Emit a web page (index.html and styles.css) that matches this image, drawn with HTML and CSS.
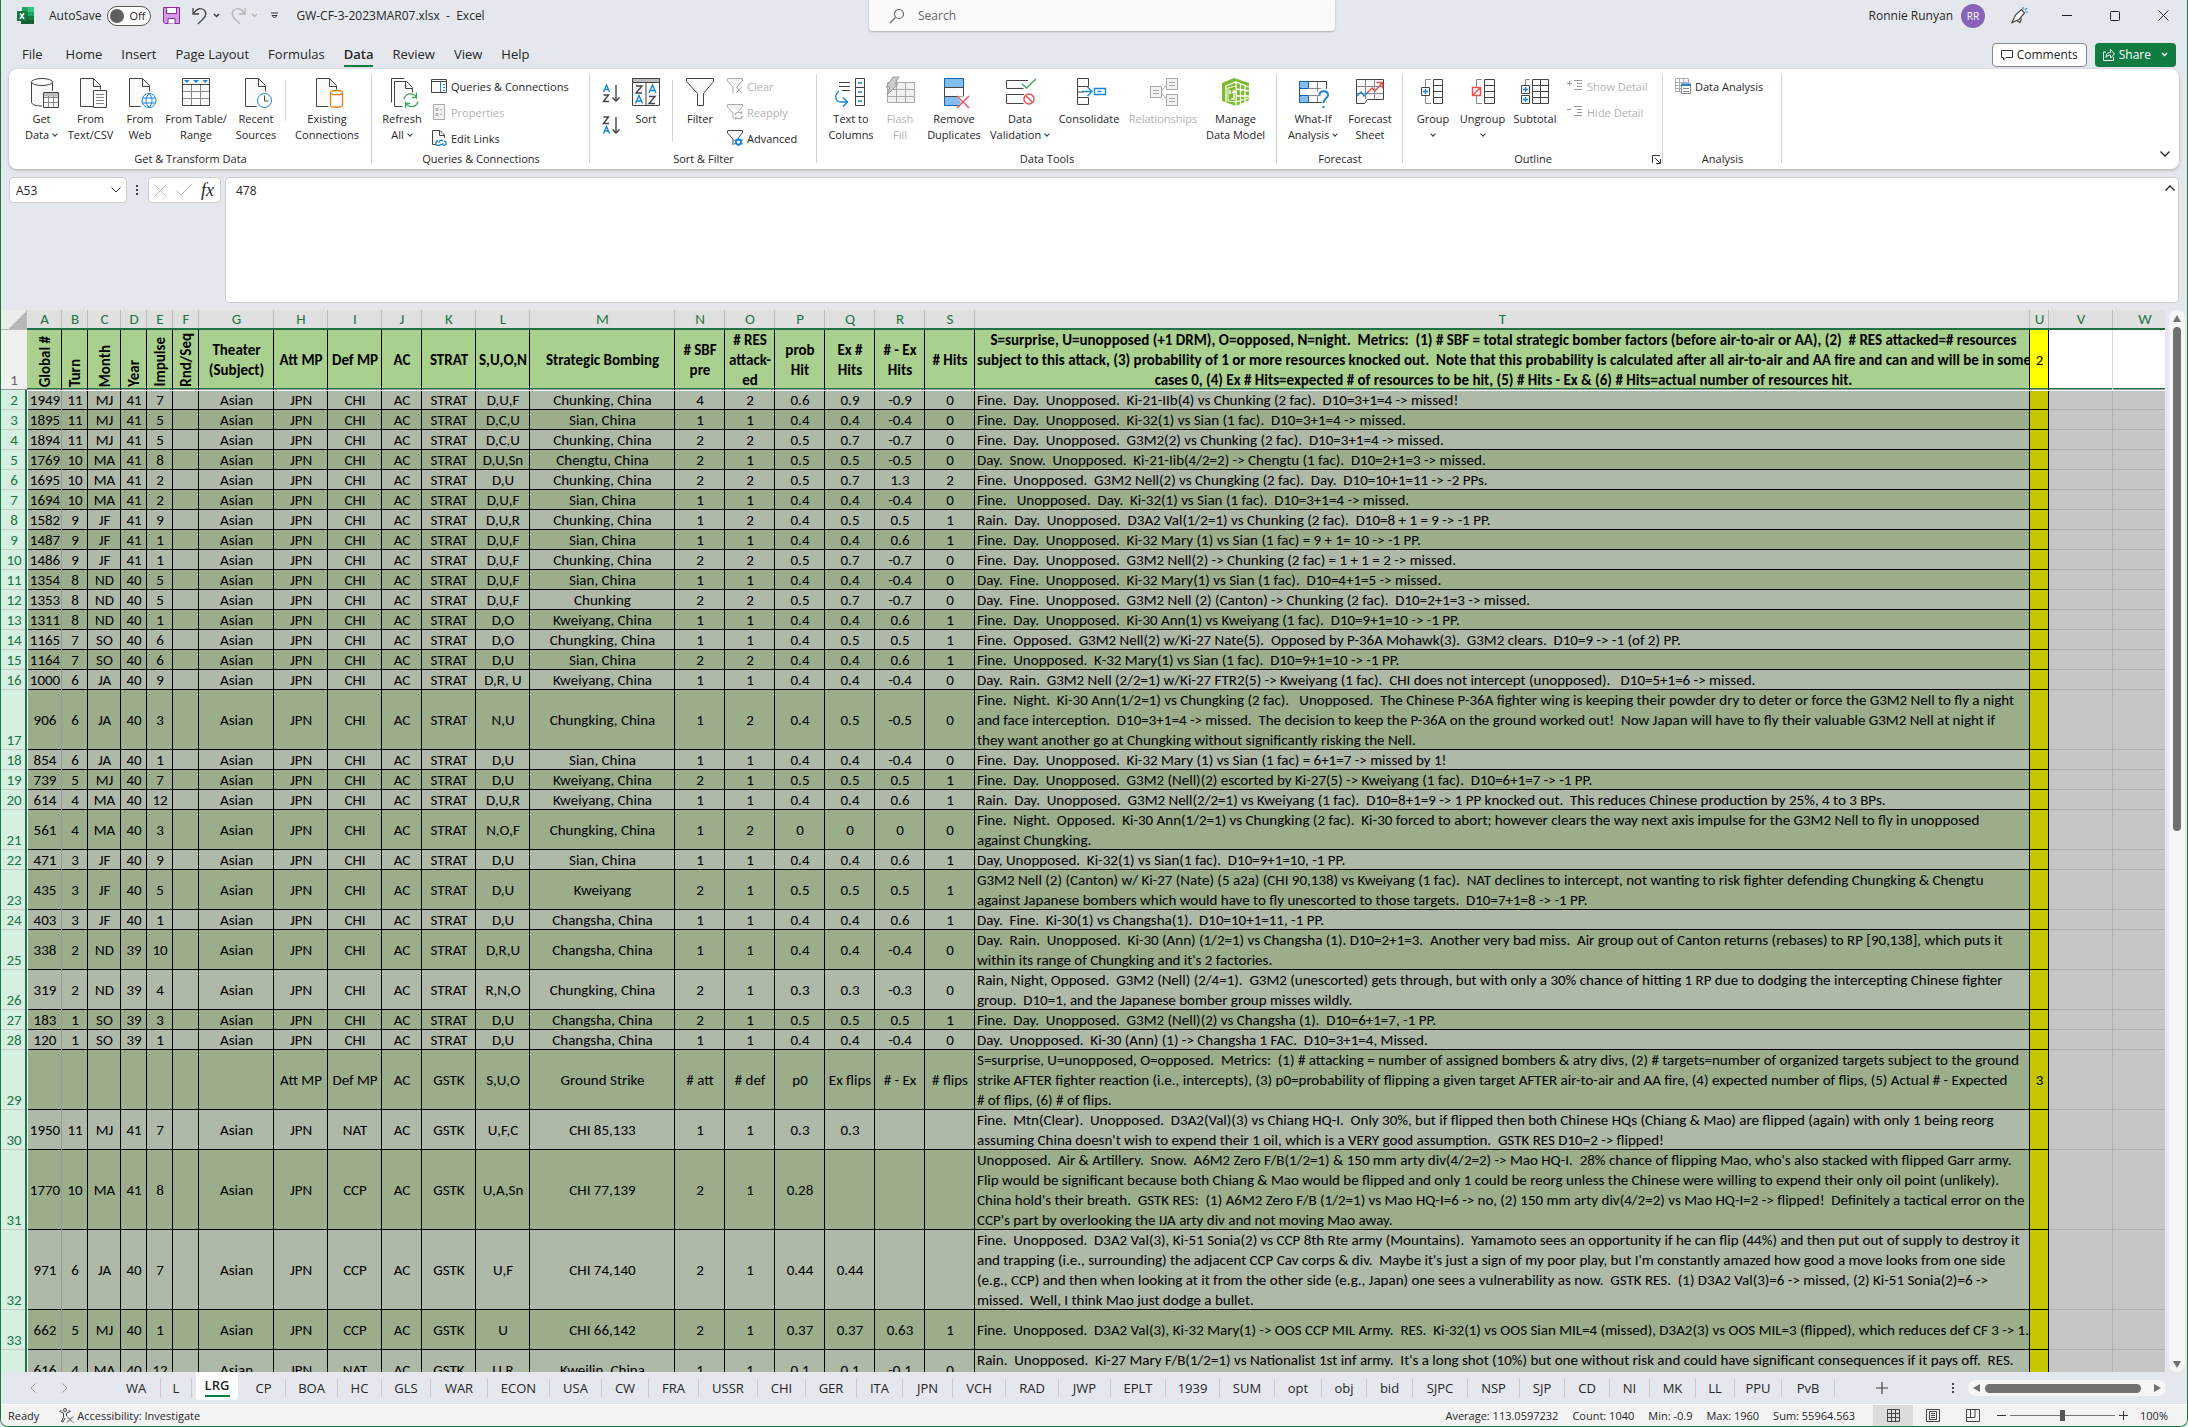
FILE: index.html
```html
<!DOCTYPE html>
<html lang="en">
<head>
  <meta charset="UTF-8" />
  <meta name="viewport" content="width=device-width, initial-scale=1" />
  <title>GW-CF-3-2023MAR07.xlsx - Excel</title>
  <link rel="stylesheet" href="styles.css">
</head>
<body>

  <header class="titlebar">
    <div class="quick">
      <svg class="logo" width="17" height="17" viewBox="0 0 17 17"><path fill="#21a366" d="M5 0h11v5H5z"/><path fill="#33c481" d="M11 0h6v5h-6z"/><path fill="#107c41" d="M5 5h6v4H5z"/><path fill="#21a366" d="M11 5h6v4h-6z"/><path fill="#185c37" d="M5 9h6v8H4V9z"/><path fill="#107c41" d="M11 9h6v4h-6z"/><path fill="#185c37" d="M11 13h6v4h-6z"/><path fill="#107c41" d="M0 4h10v10H0z"/><path stroke="#fff" stroke-width="1.500" d="M3 6.200l4 5.600M7 6.200l-4 5.600"/></svg>
      <label for="autosave">AutoSave</label>
      <span class="toggle"><input type="checkbox" id="autosave"><span class="toggle-text">Off</span></span>
      <button class="plain save" aria-label="Save"><svg width="17" height="17" viewBox="0 0 17 17"><path fill="#d59be0" stroke="#892c9c" d="M.5.5h16v16H2l-1.500-1.500z"/><path fill="#fff" stroke="#892c9c" d="M3.500.5h10v6h-10zM5 16.500v-5h7v5"/></svg></button>
      <button class="plain undo" aria-label="Undo"><svg width="16" height="18" viewBox="0 0 16 18"><path d="M1 1v6h6M1.500 6.500C5 1 9 .5 12 3c3 3 2 6-1 9l-5 5" fill="none" stroke="#444" stroke-width="1.300"/></svg><svg width="7" height="5" viewBox="0 0 7 5"><path d="M1 1l2.500 2.500L6 1" fill="none" stroke="#333" stroke-width="1.300"/></svg></button>
      <button class="plain redo" aria-label="Redo"><svg width="16" height="18" viewBox="0 0 16 18"><path d="M15 1v6H9M14.500 6.500C11 1 7 .5 4 3c-3 3-2 6 1 9l5 5" fill="none" stroke="#b4b4b4" stroke-width="1.300"/></svg><svg width="7" height="5" viewBox="0 0 7 5"><path d="M1 1l2.500 2.500L6 1" fill="none" stroke="#b4b4b4" stroke-width="1.300"/></svg></button>
      <button class="plain more" aria-label="Customize"><svg width="9" height="8" viewBox="0 0 9 8"><path d="M1 1h7M2 3.500L4.500 6 7 3.500z" fill="none" stroke="#333"/></svg></button>
      <span class="filename">GW-CF-3-2023MAR07.xlsx&nbsp; -&nbsp; Excel</span>
    </div>
    <div class="search">
      <svg width="16" height="16" viewBox="0 0 16 16"><circle cx="10" cy="6" r="4.500" fill="none" stroke="#666" stroke-width="1.200"/><path d="M6.500 9.500L1 15" stroke="#666" stroke-width="1.200"/></svg>
      <input type="text" placeholder="Search" aria-label="Search">
    </div>
    <div class="account">
      <span>Ronnie Runyan</span>
      <span class="avatar">RR</span>
      <button class="plain win" aria-label="Whats new"><svg width="18" height="18" viewBox="0 0 18 18"><path d="M2 15.500L5.500 8l6-5.500 3 3.500L9 12.500zM7 13.500l3 2 1.500-4" fill="#fff" stroke="#444" stroke-width="1.200"/><path d="M13 2.500V0M15 3l2-2M15.500 5H18" stroke="#2a8dd4" stroke-width="1.200"/></svg></button>
      <button class="plain win" aria-label="Minimize"><svg width="10" height="10" viewBox="0 0 10 10"><path d="M0 4.500h10" stroke="#222"/></svg></button>
      <button class="plain win" aria-label="Maximize"><svg width="10" height="10" viewBox="0 0 10 10"><rect x=".5" y=".5" width="9" height="9" rx="1" fill="none" stroke="#222"/></svg></button>
      <button class="plain win" aria-label="Close"><svg width="11" height="11" viewBox="0 0 11 11"><path d="M.5.5l10 10M10.500.5l-10 10" stroke="#222"/></svg></button>
    </div>
  </header>

  <nav class="menu">
    <a href="#">File</a>
    <a href="#">Home</a>
    <a href="#">Insert</a>
    <a href="#">Page Layout</a>
    <a href="#">Formulas</a>
    <a href="#" class="active">Data</a>
    <a href="#">Review</a>
    <a href="#">View</a>
    <a href="#">Help</a>
    <button class="comments"><svg width="12" height="12" viewBox="0 0 12 12"><path d="M.5 1.500h11v7H5l-2.500 2.500V8.500h-2z" fill="none" stroke="#333"/></svg>Comments</button>
    <button class="share"><svg width="12" height="13" viewBox="0 0 12 13"><path d="M3 4H.500v8.500h10V9" fill="none" stroke="#fff"/><path d="M3 9.500c0-4 2-5 4.500-5V1.500L11.500 6l-4 4V7C5.500 7 4 8 3 9.500z" fill="none" stroke="#fff"/></svg>Share<svg class="drop" width="7" height="5" viewBox="0 0 7 5"><path d="M1 1l2.500 2.500L6 1" fill="none" stroke="#fff" stroke-width="1.300"/></svg></button>
  </nav>

  <section class="ribbon">
    <div class="group g-get">
      <div class="tools">
        <button class="big w49"><svg viewBox="0 0 32 32"><path d="M5.500 5v20c0 2.500 4 4 10.500 4l1-14 9.500-1V5z" fill="#fafafa"/><path d="M5.500 5v20c0 2.500 4 4 10.500 4M26.500 14V5" class="k"/><ellipse cx="16" cy="5" rx="10.500" ry="3.500" class="kf"/><path class="kf" d="M17.500 15.500h15v15h-15z"/><path fill="#bbb" d="M18 16h14v3.500H18z"/><path class="g" d="M18 20.500h14M18 25.500h14M22.500 19v11M27.500 19v11"/></svg>Get<br>Data <i class="chev"></i></button>
        <button class="big w49"><svg viewBox="0 0 32 32"><path class="kf" d="M19.500 29.500h-14v-28h13l7 7v4"/><path class="k" d="M18.500 1.500v8h7"/><path class="kf" d="M18.500 13.500h13v17h-13z"/><path class="g" d="M21 17.500h8M21 20.500h8M21 23.500h8M21 26.500h8"/></svg>From<br>Text/CSV</button>
        <button class="big w50"><svg viewBox="0 0 32 32"><path class="kf" d="M16.500 29.500h-11v-28h13l7 7v6"/><path class="k" d="M18.500 1.500v8h7"/><circle cx="25" cy="23.500" r="7" class="bf"/><path class="b" d="M19 21h12M19 26h12M25 16.500c-4 4-4 10 0 14c4-4 4-10 0-14"/></svg>From<br>Web</button>
        <button class="big w62"><svg viewBox="0 0 32 32"><path class="kf" d="M2.500 1.500h27v27h-27z"/><path class="g" d="M3 14.500h26M3 21.500h26M11.500 8v20M20.500 8v20"/><path class="k" d="M2.500 7.500h27"/><path fill="#1a84d6" d="M4 3h5.500L6.800 6zM13 3h6l-3 3zM22.500 3H28l-2.700 3z"/></svg>From Table/<br>Range</button>
        <button class="big w58"><svg viewBox="0 0 32 32"><path class="kf" d="M16.500 29.500h-11v-28h13l7 7v6"/><path class="k" d="M18.500 1.500v8h7"/><circle cx="24.500" cy="23.500" r="7" class="bf"/><path class="k" d="M24.500 18.500v5.500h4"/></svg>Recent<br>Sources</button>
        <span class="split"></span>
        <button class="big w82"><svg viewBox="0 0 32 32"><path class="kf" d="M17.500 29.500h-12v-28h13l7 7v4"/><path class="k" d="M18.500 1.500v8h7"/><path fill="#fff" stroke="#e07b1a" stroke-width="1.300" d="M19.500 15.500v12.500c0 3 12 3 12 0v-12.500"/><ellipse cx="25.500" cy="15.500" rx="6" ry="2.200" fill="#fff" stroke="#e07b1a" stroke-width="1.300"/></svg>Existing<br>Connections</button>
      </div>
      <div class="caption">Get &amp; Transform Data</div>
    </div>
    <div class="group g-queries">
      <div class="tools">
        <button class="big w48"><svg viewBox="0 0 32 32"><path class="k" d="M5.500 25.500v-24h13"/><path class="kf" d="M16.500 29.500h-8v-25h12l6 6v5"/><path class="k" d="M19.500 4.500v7h7"/><path fill="none" stroke="#3fa35c" stroke-width="1.300" d="M18 22c2-7 10-6 12.500-1.500v-5M31 20.500h-5M32 24.500c-2 7-10 6-12.500 1.500v5M19 26.500h5"/></svg>Refresh<br>All <i class="chev"></i></button>
        <div class="stack s5">
          <button class="small"><svg viewBox="0 0 16 16"><path class="kf" d="M.5 1.500h15v13H.5z"/><path class="k" d="M.5 3.500h15"/><path class="b" d="M9.500 4v10M12 6.500h2M12 9.500h2M12 12.500h2"/></svg>Queries &amp; Connections</button>
          <button class="small" disabled><svg viewBox="0 0 16 16"><path fill="#f3f3f3" stroke="#aaa" d="M2.500.500h11v15h-11zM5 4.500h2v2H5zM5 9.500h2v2H5zM9 5.500h2M9 10.500h2"/></svg>Properties</button>
          <button class="small"><svg viewBox="0 0 16 16"><path class="kf" d="M5.500 14.500h-4V.5H9l4.500 4.500v3"/><path class="k" d="M8.500.5v5h5"/><path class="b" d="M7 11c-3 0-3 4.500 0 4.500h2M8 13c0-3 2-3.500 4-2M12 15.500c4 0 4-4.500 1-4.500M12 13c0 2-2 2-3 1" stroke-width="1.300"/></svg>Edit Links</button>
        </div>
      </div>
      <div class="caption">Queries &amp; Connections</div>
    </div>
    <div class="group g-sort">
      <div class="tools">
        <div class="stack az">
          <button class="plain" aria-label="Sort A to Z"><svg width="18" height="20" viewBox="0 0 18 20"><path class="b w" d="M1.500 8L4.500 1l3 7M2.500 5.500h4"/><path class="k w" d="M1.500 11h5l-5 6.500h5.500M14 1v16M10.500 13.500L14 17l3.500-3.500"/></svg></button>
          <button class="plain" aria-label="Sort Z to A"><svg width="18" height="20" viewBox="0 0 18 20"><path class="b w" d="M1.500 17.500l3-7 3 7M2.500 15h4"/><path class="k w" d="M1.500 1h5l-5 6.500h5.500M14 1v16M10.500 13.500L14 17l3.500-3.500"/></svg></button>
        </div>
        <button class="big w52"><svg viewBox="0 0 32 32"><path class="kf" d="M2.500 1.500h27v27h-27z"/><path fill="#bbb" stroke="#444" d="M2.500 1.500h27v4h-27z"/><path class="k" d="M16 5v24"/><path class="k w" d="M6 9h6l-6 7h6M19 19.500h6l-6 7h6"/><path class="b w" d="M5.500 26.500l3.500-8 3.500 8M7 24h4M19 16l3.500-8 3.500 8M20.500 13.500h4"/></svg>Sort</button>
        <span class="split tall"></span>
        <button class="big w54"><svg viewBox="0 0 32 32"><path class="kf" d="M2.500 1.500h27v3L19.500 16.500v12h-6v-12L2.500 4.500z"/></svg>Filter</button>
        <div class="stack">
          <button class="small" disabled><svg viewBox="0 0 16 16"><path fill="#f3f3f3" stroke="#aaa" d="M.5.500h15v2l-5 6v1M.5 1v2l5.500 6v6"/><path stroke="#aaa" d="M9 9l6 6M15 9l-6 6"/></svg>Clear</button>
          <button class="small" disabled><svg viewBox="0 0 16 16"><path fill="#f3f3f3" stroke="#aaa" d="M.5.500h15v2l-4 5M.5 1v2l5.500 6v6"/><path fill="none" stroke="#aaa" stroke-width="1.200" d="M8 11c1-4 6-3 6.500-1V7.500M15.500 12c-1 4-6 3-7 1v2.500"/></svg>Reapply</button>
          <button class="small"><svg viewBox="0 0 16 16"><path class="kf" d="M.5.500h15v2l-4 5M.5 1v2l5.500 6v6"/><circle cx="11.500" cy="12" r="2.500" fill="none" stroke="#1a84d6" stroke-width="1.800"/><path class="b" d="M11.500 7.500v2M11.500 14v2M7.500 10l2 1M13.500 13l2 1M7.500 14l2-1M13.500 11l2-1" stroke-width="1.600"/></svg>Advanced</button>
        </div>
      </div>
      <div class="caption">Sort &amp; Filter</div>
    </div>
    <div class="group g-tools">
      <div class="tools">
        <button class="big w56"><svg viewBox="0 0 32 32"><path class="k" d="M4 5.500h11M4 9.500h11M7 13.500h8"/><path class="kf" d="M20.500 1.500h9v27h-9zM20.500 10.500h9M20.500 19.500h9"/><path class="b w" d="M23 6h4M23 15h4M23 24h4M4 14c-5 4-4 11 2 11h6M8 20.500l4.500 4.500-4.500 4.500"/></svg>Text to<br>Columns</button>
        <button class="big w42" disabled><svg viewBox="0 0 32 32"><path fill="#f1f1f1" stroke="#aaa" d="M3.500 5.500h27v20h-27zM3.500 12.500h27M3.500 19.500h27M12.500 6v20M21.500 6v20"/><path fill="#ccc" stroke="#999" d="M9 0h6l-4 7h3L3 18l3-8H2z"/></svg>Flash<br>Fill</button>
        <button class="big w66"><svg viewBox="0 0 32 32"><path fill="#83beec" stroke="#0f64ad" d="M6.500 1.500h19v9h-19zM6.500 19.500h19v9h-19z"/><path class="kf" d="M6.500 10.500h19v9h-19z"/><path fill="#fff" d="M19 19.500h8v11h-8l4-5z"/><path stroke="#ee4b4b" stroke-width="1.400" d="M19 19l12 12M31 19L19 31"/></svg>Remove<br>Duplicates</button>
        <button class="big w66"><svg viewBox="0 0 32 32"><path class="kf" d="M24 3.500H2.500v8h17M20 17.500H2.500v9h17"/><path fill="none" stroke="#3fa35c" stroke-width="1.400" d="M18 7l4.500 4L32 2"/><circle cx="25" cy="22" r="5" fill="#fff" stroke="#ee4b4b" stroke-width="1.400"/><path stroke="#ee4b4b" stroke-width="1.400" d="M21.500 18.500l7 7"/></svg>Data<br>Validation <i class="chev"></i></button>
        <button class="big w72"><svg viewBox="0 0 32 32"><path class="kf" d="M4.500 1.500h11v8h-11zM4.500 20.500h11v7h-11z"/><path class="k" d="M4.500 9.500v11M4.500 15h6"/><path class="b w" d="M9 14.500h9M14.500 10l4.500 4.500-4.500 4.500M21.500 11.500h11v6h-11zM24.500 14.500h4"/></svg>Consolidate</button>
        <button class="big w76" disabled><svg viewBox="0 0 32 32"><path fill="#f1f1f1" stroke="#aaa" d="M3.500 9.500h11v11h-11zM19.500 1.500h11v11h-11zM19.500 17.500h11v11h-11zM14.500 14l5-6M14.500 16l5 6M6 13.500h6M6 16.500h6M22 5.500h6M22 8.500h6M22 21.500h6M22 24.500h6"/></svg>Relationships</button>
        <button class="big w69"><svg viewBox="0 0 32 32"><path fill="#7dbb2c" d="M2 6l12-5 15 5v17l-13 6-14-5z"/><path fill="none" stroke="#fff" stroke-width="1.300" d="M6 25V9l10-4 13 5M16 5v24M20.500 7v20M25 8.500v17M16 12l13 2M16 19l13 0M16 25l13-4"/><path fill="#7dbb2c" stroke="#fff" d="M8 11l8-2v16l-8-1z"/><path fill="none" stroke="#fff" stroke-width="1.400" d="M11 22h3v-8M12 16l2-2.500 2 2.500M10 13v4"/></svg>Manage<br>Data Model</button>
      </div>
      <div class="caption">Data Tools</div>
    </div>
    <div class="group g-forecast">
      <div class="tools">
        <button class="big w60"><svg viewBox="0 0 32 32"><path class="kf" d="M2.500 4.500h27v21h-27z"/><path class="g" d="M11.500 11.500h18M11.500 18.500h12M20.500 5v20"/><path fill="#83beec" stroke="#0f64ad" d="M2.500 4.500h9v7h-9zM2.500 18.500h9v7h-9z"/><path fill="none" stroke="#fff" stroke-width="5" d="M22 18c0-6 9-6 9 0 0 4-4 3-4 8v5"/><path class="b" stroke-width="2" d="M22.500 18c0-5 8.500-5 8.500 0 0 4-4.500 3-4.500 8M26.500 29v2"/></svg>What-If<br>Analysis <i class="chev"></i></button>
        <button class="big w54"><svg viewBox="0 0 32 32"><path class="kf" d="M2.500 2.500h27v20h-16l-3 4h-8z"/><path class="g" d="M3 9.500h26M3 16.500h26M11.500 3v19M20.500 3v19"/><path class="b w" d="M3 19l4-4 3 4 4-4"/><path fill="none" stroke="#ee4b4b" stroke-width="1.400" d="M14 15l4-4 3 3 7-8M22.500 5.500h6v6"/></svg>Forecast<br>Sheet</button>
      </div>
      <div class="caption">Forecast</div>
    </div>
    <div class="group g-outline">
      <div class="tools">
        <button class="big w48"><svg viewBox="0 0 32 32"><path class="kf" d="M16.500 2.500h9v24h-9zM16.500 8.500h9M16.500 14.500h9M16.500 20.500h9"/><path class="g" d="M14 2.500H8.500v8M8.500 19v7.500H14"/><path class="kf" d="M4.500 10.500h8v8h-8z"/><path class="b w" d="M6 14.500h5M8.500 12v5"/></svg>Group<br><i class="chev"></i></button>
        <button class="big w51"><svg viewBox="0 0 32 32"><path class="kf" d="M17.500 2.500h10v24h-10zM17.500 8.500h10M17.500 14.500h10M17.500 20.500h10"/><path class="g" d="M15 2.500H9.500v8M9.500 19v7.500H15"/><path fill="#fff" stroke="#ee4b4b" stroke-width="1.400" d="M5.500 10.500h8v8h-8zM5.500 18.500l8-8"/></svg>Ungroup<br><i class="chev"></i></button>
        <button class="big w54"><svg viewBox="0 0 32 32"><path class="kf" d="M13.500 2.500h16v24h-16zM13.500 8.500h16M13.500 14.500h16M13.500 20.500h16M21.500 2.500v24"/><path class="g" d="M11 2.500H6.500v6"/><path class="kf" d="M2.500 8.500h8v8h-8zM2.500 18.500h8v8h-8z"/><path class="b w" d="M4 12.500h5M6.500 10v5M4 22.500h5M6.500 20v5"/></svg>Subtotal</button>
        <div class="stack s5">
          <button class="small" disabled><svg viewBox="0 0 16 16"><path fill="none" stroke="#999" d="M0 5.500h5M2.500 3v5M7 2.500h8M10 5.500h5M10 8.500h5M7 11.500h8"/></svg>Show Detail</button>
          <button class="small" disabled><svg viewBox="0 0 16 16"><path fill="none" stroke="#999" d="M0 5.500h4M7 2.500h8M10 5.500h5M10 8.500h5M7 11.500h8"/></svg>Hide Detail</button>
        </div>
      </div>
      <div class="caption">Outline<button class="plain launcher" aria-label="Outline settings"><svg width="9" height="9" viewBox="0 0 9 9"><path d="M.5 8V.5H8M3 3l5 5M8.500 4v4.500H4" fill="none" stroke="#333"/></svg></button></div>
    </div>
    <div class="group g-analysis">
      <div class="tools">
        <div class="stack">
          <button class="small"><svg viewBox="0 0 16 16"><path fill="#fff" stroke="#aaa" d="M.5.500h13v13H.500zM.5 4.500h13M.5 7.500h13M.5 10.500h13M4.500.5v13M8.500.5v13"/><path fill="#fff" stroke="#888" d="M6.500 6.500h9v9h-9zM8 10.500h6M8 13.500h6"/><path fill="#2f7fc9" d="M6 5.500h10v2.500H6z"/></svg>Data Analysis</button>
        </div>
      </div>
      <div class="caption">Analysis</div>
    </div>
    <button class="plain collapse" aria-label="Collapse ribbon"><svg width="10" height="6" viewBox="0 0 10 6"><path d="M.5.5L5 5 9.500.5" fill="none" stroke="#222" stroke-width="1.300"/></svg></button>
  </section>

  <section class="formula-row">
    <div class="namebox">
      <input type="text" value="A53" aria-label="Name box">
      <svg width="10" height="6" viewBox="0 0 10 6"><path d="M.5.5L5 5 9.500.5" fill="none" stroke="#333"/></svg>
    </div>
    <span class="grip"></span>
    <div class="fx">
      <button class="plain" aria-label="Cancel"><svg width="13" height="13" viewBox="0 0 13 13"><path d="M.5.5l12 12M12.500.5l-12 12" stroke="#b8b8b8"/></svg></button>
      <button class="plain" aria-label="Enter"><svg width="16" height="12" viewBox="0 0 16 12"><path d="M.5 6.500l4.500 4.500L15.500.5" fill="none" stroke="#b8b8b8"/></svg></button>
      <button class="plain fx-label">fx</button>
    </div>
    <div class="formula">
      <textarea aria-label="Formula">478</textarea>
      <svg width="10" height="6" viewBox="0 0 10 6"><path d="M.5 5.500L5 1l4.500 4.500" fill="none" stroke="#222" stroke-width="1.300"/></svg>
    </div>
  </section>

  <main class="sheet">
    <div class="grid-wrap">
      <table class="grid">
        <colgroup id="cols"></colgroup>
        <thead id="head"></thead>
        <tbody id="rows"></tbody>
      </table>
    </div>
    <div class="vscroll"><i class="up"></i><div class="vthumb"></div><i class="down"></i></div>
  </main>

  <nav class="tabs">
    <button class="plain arrow" aria-label="Previous sheet"><svg width="6" height="10" viewBox="0 0 6 10"><path d="M5.500.5L1 5l4.500 4.500" fill="none" stroke="#999"/></svg></button>
    <button class="plain arrow" aria-label="Next sheet"><svg width="6" height="10" viewBox="0 0 6 10"><path d="M.5.5L5 5 .5 9.500" fill="none" stroke="#999"/></svg></button>
    <div class="tab-list" id="tabs"></div>
    <button class="plain add" aria-label="New sheet"><svg width="12" height="12" viewBox="0 0 12 12"><path d="M6 0v12M0 6h12" stroke="#444" stroke-width="1.200"/></svg></button>
    <span class="grip"></span>
    <div class="hscroll"><i class="left"></i><div class="hthumb"></div><i class="right"></i></div>
  </nav>

  <footer class="status">
    <span>Ready</span>
    <button class="plain access"><svg width="15" height="15" viewBox="0 0 15 15"><circle cx="6" cy="2" r="1.500" class="k"/><path class="k" d="M1 3.500l3.500 1.500v4L2.500 13.500l1.500.500 2-4M11 3.500L7.500 5v3M.5 3.500c.5-1 1-1 2-.5M11.500 3.500c-.5-1-1-1-2-.5M8 8.500l6 6M14 8.500l-6 6"/></svg>Accessibility: Investigate</button>
    <div class="stats">
      <span>Average: 113.0597232</span>
      <span>Count: 1040</span>
      <span>Min: -0.9</span>
      <span>Max: 1960</span>
      <span>Sum: 55964.563</span>
    </div>
    <button class="plain view on" aria-label="Normal view"><svg width="13" height="13" viewBox="0 0 13 13"><path class="k" d="M.5.500h12v12H.500zM.5 4.500h12M.5 8.500h12M4.500.5v12M8.500.5v12"/></svg></button>
    <button class="plain view" aria-label="Page layout view"><svg width="14" height="13" viewBox="0 0 14 13"><path class="k" d="M.5.500h13v12H.500zM3.500 2.500h7v8h-7zM5 4.500h4M5 6.500h4M5 8.500h4"/></svg></button>
    <button class="plain view" aria-label="Page break view"><svg width="14" height="13" viewBox="0 0 14 13"><path class="k" d="M.5.500h13v12H.500zM4.500.5v8H9V.5M.5 8.500h4"/></svg></button>
    <button class="plain zoom-btn" aria-label="Zoom out"><svg width="9" height="9" viewBox="0 0 9 9"><path d="M0 4.500h9" stroke="#333"/></svg></button>
    <input type="range" class="zoom" min="0" max="200" value="100" aria-label="Zoom">
    <button class="plain zoom-btn" aria-label="Zoom in"><svg width="9" height="9" viewBox="0 0 9 9"><path d="M0 4.500h9M4.500 0v9" stroke="#333"/></svg></button>
    <span class="percent">100%</span>
  </footer>

  <script src="script.js"></script>
</body>
</html>
```

FILE: styles.css
```css
* {
  box-sizing: border-box;
}
body {
  margin: 0;
  height: 100vh;
  display: flex;
  flex-direction: column;
  overflow: hidden;
  background: #e4e7ee;
  border: 1px solid #107c41;
  border-top: none;
  border-radius: 0 0 8px 8px;
  font-family: "Open Sans", "Noto Sans", sans-serif;
  font-size: 11px;
  color: #262626;
}
button, input, textarea {
  font: inherit;
  color: inherit;
}
svg {
  display: block;
  flex: none;
}
.k { fill: none; stroke: #444; }
.kf { fill: #fafafa; stroke: #444; }
.g { fill: none; stroke: #888; }
.b { fill: none; stroke: #1a84d6; }
.bf { fill: #fff; stroke: #1a84d6; }
.w { stroke-width: 1.4; }
.plain {
  border: none;
  background: none;
  padding: 0;
  display: flex;
  align-items: center;
  justify-content: center;
}

/* title bar */
.titlebar {
  display: grid;
  grid-template-columns: 1fr 466px 1fr;
  height: 36px;
  padding: 0 0 5px 16px;
  font-size: 12px;
}
.quick, .account {
  display: flex;
  align-items: center;
}
.quick label {
  margin: 0 6px 0 15px;
}
.toggle {
  display: flex;
  align-items: center;
  width: 44px;
  height: 20px;
  border: 1px solid #555;
  border-radius: 10px;
  background: #fff;
}
.toggle input {
  appearance: none;
  width: 14px;
  height: 14px;
  margin: 0 5px 0 2px;
  border-radius: 50%;
  background: #5f5f5f;
}
.toggle-text {
  font-size: 11px;
}
.save {
  margin: 0 12px;
}
.undo, .redo {
  gap: 5px;
  width: 28px;
}
.undo {
  margin-right: 10px;
}
.more {
  margin: 0 17px 0 12px;
}
.search {
  display: flex;
  align-items: center;
  gap: 11px;
  padding-left: 20px;
  background: #fafafa;
  border-radius: 0 0 4px 4px;
  box-shadow: 0 1px 2px #aaa;
}
.search input {
  flex: 1;
  border: none;
  background: none;
  outline: none;
}
.search input::placeholder {
  color: #666;
}
.account {
  justify-content: flex-end;
}
.avatar {
  width: 24px;
  height: 24px;
  margin: 0 10px 0 8px;
  border-radius: 50%;
  background: #8764b8;
  color: #fff;
  font-size: 10px;
  line-height: 24px;
  text-align: center;
}
.win {
  width: 48px;
}

/* ribbon tabs */
.menu {
  display: flex;
  align-items: center;
  gap: 19px;
  height: 33px;
  padding: 4px 11px 0 21px;
  font-size: 13px;
}
.menu a {
  color: inherit;
  text-decoration: none;
  line-height: 21px;
  padding-top: 1px;
  border-bottom: 2px solid transparent;
}
.menu a:first-child {
  margin-right: 4px;
}
.menu a.active {
  font-weight: 600;
  border-color: #107c41;
}
.comments, .share {
  display: flex;
  align-items: center;
  gap: 4px;
  height: 24px;
  padding: 0 8px;
  border-radius: 4px;
  font-size: 12px;
}
.comments {
  margin-left: auto;
  border: 1px solid #888;
  background: #fff;
}
.share {
  margin-left: -11px;
  border: none;
  background: #107c41;
  color: #fff;
}
.drop {
  margin-left: 6px;
}

/* ribbon */
.ribbon {
  display: flex;
  height: 100px;
  margin: 0 8px;
  padding: 4px 0 2px;
  background: #fff;
  border-radius: 8px;
  box-shadow: 0 1px 3px #aaa;
}
.group {
  display: flex;
  flex-direction: column;
  justify-content: space-between;
  flex: none;
  background: linear-gradient(#d4d4d4, #d4d4d4) right 1px / 1px 89px no-repeat;
}
.g-get { width: 363px; }
.g-queries { width: 218px; }
.g-sort { width: 227px; }
.g-tools { width: 460px; }
.g-forecast { width: 126px; }
.g-outline { width: 260px; }
.g-analysis { width: 119px; }
.tools {
  display: flex;
  align-items: flex-start;
  height: 78px;
  padding-left: 6px;
}
.g-get .tools { padding-left: 8px; }
.g-sort .tools, .g-analysis .tools { padding-left: 12px; }
.caption {
  position: relative;
  line-height: 16px;
  text-align: center;
}
.launcher {
  position: absolute;
  right: 2px;
  top: 4px;
}
.big {
  display: block;
  border: none;
  background: none;
  padding: 4px 0 0;
  line-height: 16px;
  text-align: center;
  white-space: nowrap;
}
.big svg {
  width: 32px;
  height: 32px;
  margin: 0 auto 2px;
  overflow: visible;
}
.w42 { width: 42px; }
.w48 { width: 48px; }
.w49 { width: 49px; }
.w50 { width: 50px; }
.w51 { width: 51px; }
.w52 { width: 52px; }
.w54 { width: 54px; }
.w56 { width: 56px; }
.w58 { width: 58px; }
.w60 { width: 60px; }
.w62 { width: 62px; }
.w66 { width: 66px; }
.w69 { width: 69px; }
.w72 { width: 72px; }
.w76 { width: 76px; }
.w82 { width: 82px; }
.chev {
  display: inline-block;
  width: 4px;
  height: 4px;
  margin: 0 1px 3px;
  border: solid #333;
  border-width: 0 1px 1px 0;
  transform: rotate(45deg);
}
.split {
  width: 1px;
  height: 41px;
  margin-top: 7px;
  background: #d4d4d4;
}
.split.tall {
  height: 62px;
}
.stack {
  display: flex;
  flex-direction: column;
}
.s5 {
  margin-left: 5px;
}
.small {
  display: flex;
  align-items: center;
  gap: 4px;
  height: 26px;
  padding: 0;
  border: none;
  background: none;
  white-space: nowrap;
}
.small svg {
  width: 16px;
  height: 16px;
}
button:disabled {
  color: #b3b3b3;
}
.az {
  gap: 12px;
  padding-top: 11px;
}
.collapse {
  margin: 0 9px 10px auto;
  align-self: flex-end;
}

/* formula bar */
.formula-row {
  display: flex;
  align-items: flex-start;
  height: 133px;
  margin: 8px 8px 0;
  font-size: 12px;
}
.namebox, .fx, .formula {
  display: flex;
  border: 1px solid #d0d0d0;
  border-radius: 4px;
  background: #fff;
}
.namebox {
  align-items: center;
  width: 118px;
  height: 26px;
  padding: 0 5px 0 6px;
}
.namebox input {
  flex: 1;
  width: 50px;
  padding: 0;
  border: none;
  outline: none;
}
.grip {
  width: 2px;
  height: 11px;
  margin: 8px 10px 0 9px;
  background: repeating-linear-gradient(#444 0 2px, transparent 2px 4px);
}
.fx {
  align-items: center;
  gap: 9px;
  width: 73px;
  height: 26px;
  margin-right: 4px;
  padding: 0 5px;
}
.fx-label {
  font-family: "Liberation Serif", serif;
  font-style: italic;
  font-size: 18px;
}
.formula {
  flex: 1;
  height: 126px;
  padding: 4px 3px 0 10px;
}
.formula textarea {
  flex: 1;
  padding: 0;
  border: none;
  outline: none;
  resize: none;
}
.formula svg {
  margin-top: 3px;
}

/* sheet */
.sheet {
  display: flex;
  flex: 1;
  min-height: 0;
}
.grid-wrap {
  flex: 1;
  overflow: hidden;
}
.grid {
  table-layout: fixed;
  width: calc(100% + 12px);
  border-spacing: 0;
  font-family: Calibri, Carlito, Lato, sans-serif;
  font-size: 15px;
  line-height: 20px;
  color: #000;
}
.grid th, .grid td {
  padding: 0;
  overflow: hidden;
  text-align: center;
  vertical-align: middle;
  white-space: pre;
  box-shadow: inset -1px -1px #000;
}
.grid .letters th {
  height: 20px;
  background: #e0e0e0;
  color: #217346;
  font-weight: normal;
  line-height: 18px;
  border-bottom: 2px solid #217346;
  box-shadow: inset -1px 0 #bbb;
}
.grid .letters .corner {
  background: linear-gradient(135deg, #ececec 60%, #b8b8b8 60%);
  border-bottom: 1px solid #bbb;
}
.grid .names td {
  height: 60px;
  background: #a9d08e;
  font-weight: bold;
  box-shadow: inset -1px 0 #000, inset 0 -1px #999, inset 0 -2px #217346;
}
.grid .names .turned {
  vertical-align: bottom;
}
.turned span {
  display: block;
  writing-mode: vertical-rl;
  transform: rotate(180deg);
  margin: 0 auto;
  padding-top: 3px;
  line-height: 24px;
}
.grid .rownum {
  vertical-align: bottom;
  background: #d5efe0;
  color: #217346;
  font-weight: normal;
  box-shadow: inset -2px 0 #217346, inset 0 -1px #c2cfc6;
}
.grid .names .rownum {
  background: #f0f0f0;
  color: #666;
  box-shadow: inset 0 -1px #999;
}
tbody tr:nth-child(odd) td {
  background: #aeb9a8;
}
tbody tr:nth-child(even) td {
  background: #9bad8b;
}
tbody td:nth-child(2) {
  border-left: 1px solid #fff;
}
.grid tbody td:nth-child(2) {
  box-shadow: inset -1px 0 #999, inset 0 -1px #000;
}
tbody tr:first-child td {
  border-top: 1px solid #fff;
  line-height: 19px;
}
.grid .notes {
  padding-left: 2px;
  text-align: left;
}
.grid .names .notes {
  text-align: center;
}
.grid tbody .mark {
  background: #c6c600;
}
.grid .names .mark {
  background: #ff0;
  font-weight: normal;
}
.grid tbody .blank {
  background: #c6c6c6;
  box-shadow: inset -1px -1px #b0b0b0;
}
.grid .names .blank {
  background: #fff;
  box-shadow: inset -1px 0 #d9d9d9, inset 0 -1px #999, inset 0 -2px #217346;
}
.vscroll {
  display: flex;
  flex-direction: column;
  align-items: center;
  width: 16px;
  margin: 0 2px 0 4px;
  padding: 5px 0 4px;
  background: #f5f5f5;
  border-radius: 8px;
}
.vthumb {
  width: 8px;
  height: 504px;
  margin: 5px 0 auto;
  border-radius: 4px;
  background: #707070;
}
.up, .down, .left, .right {
  border: 4px solid transparent;
}
.up {
  border-top: none;
  border-bottom: 7px solid #707070;
}
.down {
  border-bottom: none;
  border-top: 7px solid #707070;
}
.left {
  border-left: none;
  border-right: 7px solid #707070;
}
.right {
  border-right: none;
  border-left: 7px solid #707070;
}

/* sheet tabs */
.tabs {
  display: flex;
  align-items: center;
  height: 32px;
  padding-left: 16px;
}
.arrow {
  width: 32px;
}
.tab-list {
  display: flex;
  align-self: flex-start;
  padding-left: 31px;
}
.tab {
  height: 18px;
  margin-top: 7px;
  padding: 0;
  border: none;
  border-right: 1px solid #c8c8c8;
  background: none;
  font-size: 13px;
  line-height: 18px;
}
.tab.active {
  height: 28px;
  margin: 0 4px;
  padding-bottom: 3px;
  border: none;
  border-radius: 0 0 4px 4px;
  background: #fff linear-gradient(#107c41, #107c41) center 23px / 25px 2px no-repeat;
  font-weight: 600;
}
.add {
  margin-left: 41px;
}
.tabs .grip {
  margin: 0 14px 0 auto;
}
.hscroll {
  display: flex;
  align-items: center;
  width: 198px;
  height: 16px;
  margin-right: 21px;
  padding: 0 5px;
  border-radius: 8px;
  background: #f5f5f5;
}
.hthumb {
  flex: 1;
  height: 9px;
  margin: 0 13px 0 5px;
  border-radius: 5px;
  background: #707070;
}

/* status bar */
.status {
  display: flex;
  align-items: center;
  height: 22px;
  padding: 0 19px 0 7px;
  background: #f3f3f3;
  border-top: 1px solid #fff;
}
.access {
  gap: 3px;
  margin-left: 20px;
}
.stats {
  display: flex;
  gap: 14px;
  margin: 0 18px 0 auto;
}
.view {
  width: 40px;
  height: 21px;
}
.view.on {
  background: #dcdcdc;
}
.zoom-btn {
  margin: 0 4px;
}
.zoom {
  appearance: none;
  width: 105px;
  height: 12px;
  margin: 0;
  background: linear-gradient(#777, #777) center / 100% 1px no-repeat;
}
.zoom::-webkit-slider-thumb {
  appearance: none;
  width: 5px;
  height: 11px;
  background: #555;
}
.percent {
  margin-left: 8px;
}
```

FILE: script.js
```js
const letters = "ABCDEFGHIJKLMNOPQRSTUVW".split("");
const widths = [26, 35, 26, 33, 26, 26, 26, 75, 54, 54, 40, 54, 54, 145, 50, 50, 50, 50, 50, 50, 1055, 19, 64];

const names = [
  "Global #", "Turn", "Month", "Year", "Impulse", "Rnd/Seq", "Theater\n(Subject)", "Att MP", "Def MP", "AC",
  "STRAT", "S,U,O,N", "Strategic Bombing", "# SBF\npre", "# RES\nattack-\ned", "prob\nHit", "Ex #\nHits",
  "# - Ex\nHits", "# Hits",
  "S=surprise, U=unopposed (+1 DRM), O=opposed, N=night.  Metrics:  (1) # SBF = total strategic bomber factors (before air-to-air or AA), (2)  # RES attacked=# resources\nsubject to this attack, (3) probability of 1 or more resources knocked out.  Note that this probability is calculated after all air-to-air and AA fire and can and will be in some\ncases 0, (4) Ex # Hits=expected # of resources to be hit, (5) # Hits - Ex & (6) # Hits=actual number of resources hit.",
  "2", "", ""
];

// height | columns A to T | optional mark in U
const data = [
  "20|1949|11|MJ|41|7||Asian|JPN|CHI|AC|STRAT|D,U,F|Chunking, China|4|2|0.6|0.9|-0.9|0|Fine.  Day.  Unopposed.  Ki-21-IIb(4) vs Chunking (2 fac).  D10=3+1=4 -> missed!",
  "20|1895|11|MJ|41|5||Asian|JPN|CHI|AC|STRAT|D,C,U|Sian, China|1|1|0.4|0.4|-0.4|0|Fine.  Day.  Unopposed.  Ki-32(1) vs Sian (1 fac).  D10=3+1=4 -> missed.",
  "20|1894|11|MJ|41|5||Asian|JPN|CHI|AC|STRAT|D,C,U|Chunking, China|2|2|0.5|0.7|-0.7|0|Fine.  Day.  Unopposed.  G3M2(2) vs Chunking (2 fac).  D10=3+1=4 -> missed.",
  "20|1769|10|MA|41|8||Asian|JPN|CHI|AC|STRAT|D,U,Sn|Chengtu, China|2|1|0.5|0.5|-0.5|0|Day.  Snow.  Unopposed.  Ki-21-Iib(4/2=2) -> Chengtu (1 fac).  D10=2+1=3 -> missed.",
  "20|1695|10|MA|41|2||Asian|JPN|CHI|AC|STRAT|D,U|Chunking, China|2|2|0.5|0.7|1.3|2|Fine.  Unopposed.  G3M2 Nell(2) vs Chungking (2 fac).  Day.  D10=10+1=11 -> -2 PPs.",
  "20|1694|10|MA|41|2||Asian|JPN|CHI|AC|STRAT|D,U,F|Sian, China|1|1|0.4|0.4|-0.4|0|Fine.   Unopposed.  Day.  Ki-32(1) vs Sian (1 fac).  D10=3+1=4 -> missed.",
  "20|1582|9|JF|41|9||Asian|JPN|CHI|AC|STRAT|D,U,R|Chunking, China|1|2|0.4|0.5|0.5|1|Rain.  Day.  Unopposed.  D3A2 Val(1/2=1) vs Chunking (2 fac).  D10=8 + 1 = 9 -> -1 PP.",
  "20|1487|9|JF|41|1||Asian|JPN|CHI|AC|STRAT|D,U,F|Sian, China|1|1|0.4|0.4|0.6|1|Fine.  Day.  Unopposed.  Ki-32 Mary (1) vs Sian (1 fac) = 9 + 1= 10 -> -1 PP.",
  "20|1486|9|JF|41|1||Asian|JPN|CHI|AC|STRAT|D,U,F|Chunking, China|2|2|0.5|0.7|-0.7|0|Fine.  Day.  Unopposed.  G3M2 Nell(2) -> Chunking (2 fac) = 1 + 1 = 2 -> missed.",
  "20|1354|8|ND|40|5||Asian|JPN|CHI|AC|STRAT|D,U,F|Sian, China|1|1|0.4|0.4|-0.4|0|Day.  Fine.  Unopposed.  Ki-32 Mary(1) vs Sian (1 fac).  D10=4+1=5 -> missed.",
  "20|1353|8|ND|40|5||Asian|JPN|CHI|AC|STRAT|D,U,F|Chunking|2|2|0.5|0.7|-0.7|0|Day.  Fine.  Unopposed.  G3M2 Nell (2) (Canton) -> Chunking (2 fac).  D10=2+1=3 -> missed.",
  "20|1311|8|ND|40|1||Asian|JPN|CHI|AC|STRAT|D,O|Kweiyang, China|1|1|0.4|0.4|0.6|1|Fine.  Day.  Unopposed.  Ki-30 Ann(1) vs Kweiyang (1 fac).  D10=9+1=10 -> -1 PP.",
  "20|1165|7|SO|40|6||Asian|JPN|CHI|AC|STRAT|D,O|Chungking, China|1|1|0.4|0.5|0.5|1|Fine.  Opposed.  G3M2 Nell(2) w/Ki-27 Nate(5).  Opposed by P-36A Mohawk(3).  G3M2 clears.  D10=9 -> -1 (of 2) PP.",
  "20|1164|7|SO|40|6||Asian|JPN|CHI|AC|STRAT|D,U|Sian, China|2|2|0.4|0.4|0.6|1|Fine.  Unopposed.  K-32 Mary(1) vs Sian (1 fac).  D10=9+1=10 -> -1 PP.",
  "20|1000|6|JA|40|9||Asian|JPN|CHI|AC|STRAT|D,R, U|Kweiyang, China|1|1|0.4|0.4|-0.4|0|Day.  Rain.  G3M2 Nell (2/2=1) w/Ki-27 FTR2(5) -> Kweiyang (1 fac).  CHI does not intercept (unopposed).   D10=5+1=6 -> missed.",
  "60|906|6|JA|40|3||Asian|JPN|CHI|AC|STRAT|N,U|Chungking, China|1|2|0.4|0.5|-0.5|0|Fine.  Night.  Ki-30 Ann(1/2=1) vs Chungking (2 fac).   Unopposed.  The Chinese P-36A fighter wing is keeping their powder dry to deter or force the G3M2 Nell to fly a night\nand face interception.  D10=3+1=4 -> missed.  The decision to keep the P-36A on the ground worked out!  Now Japan will have to fly their valuable G3M2 Nell at night if\nthey want another go at Chungking without significantly risking the Nell.",
  "20|854|6|JA|40|1||Asian|JPN|CHI|AC|STRAT|D,U|Sian, China|1|1|0.4|0.4|-0.4|0|Fine.  Day.  Unopposed.  Ki-32 Mary (1) vs Sian (1 fac) = 6+1=7 -> missed by 1!",
  "20|739|5|MJ|40|7||Asian|JPN|CHI|AC|STRAT|D,U|Kweiyang, China|2|1|0.5|0.5|0.5|1|Fine.  Day.  Unopposed.  G3M2 (Nell)(2) escorted by Ki-27(5) -> Kweiyang (1 fac).  D10=6+1=7 -> -1 PP.",
  "20|614|4|MA|40|12||Asian|JPN|CHI|AC|STRAT|D,U,R|Kweiyang, China|1|1|0.4|0.4|0.6|1|Rain.  Day.  Unopposed.  G3M2 Nell(2/2=1) vs Kweiyang (1 fac).  D10=8+1=9 -> 1 PP knocked out.  This reduces Chinese production by 25%, 4 to 3 BPs.",
  "40|561|4|MA|40|3||Asian|JPN|CHI|AC|STRAT|N,O,F|Chungking, China|1|2|0|0|0|0|Fine.  Night.  Opposed.  Ki-30 Ann(1/2=1) vs Chungking (2 fac).  Ki-30 forced to abort; however clears the way next axis impulse for the G3M2 Nell to fly in unopposed\nagainst Chungking.",
  "20|471|3|JF|40|9||Asian|JPN|CHI|AC|STRAT|D,U|Sian, China|1|1|0.4|0.4|0.6|1|Day, Unopposed.  Ki-32(1) vs Sian(1 fac).  D10=9+1=10, -1 PP.",
  "40|435|3|JF|40|5||Asian|JPN|CHI|AC|STRAT|D,U|Kweiyang|2|1|0.5|0.5|0.5|1|G3M2 Nell (2) (Canton) w/ Ki-27 (Nate) (5 a2a) (CHI 90,138) vs Kweiyang (1 fac).  NAT declines to intercept, not wanting to risk fighter defending Chungking & Chengtu\nagainst Japanese bombers which would have to fly unescorted to those targets.  D10=7+1=8 -> -1 PP.",
  "20|403|3|JF|40|1||Asian|JPN|CHI|AC|STRAT|D,U|Changsha, China|1|1|0.4|0.4|0.6|1|Day.  Fine.  Ki-30(1) vs Changsha(1).  D10=10+1=11, -1 PP.",
  "40|338|2|ND|39|10||Asian|JPN|CHI|AC|STRAT|D,R,U|Changsha, China|1|1|0.4|0.4|-0.4|0|Day.  Rain.  Unopposed.  Ki-30 (Ann) (1/2=1) vs Changsha (1). D10=2+1=3.  Another very bad miss.  Air group out of Canton returns (rebases) to RP [90,138], which puts it\nwithin its range of Chungking and it's 2 factories.",
  "40|319|2|ND|39|4||Asian|JPN|CHI|AC|STRAT|R,N,O|Chungking, China|2|1|0.3|0.3|-0.3|0|Rain, Night, Opposed.  G3M2 (Nell) (2/4=1).  G3M2 (unescorted) gets through, but with only a 30% chance of hitting 1 RP due to dodging the intercepting Chinese fighter\ngroup.  D10=1, and the Japanese bomber group misses wildly.",
  "20|183|1|SO|39|3||Asian|JPN|CHI|AC|STRAT|D,U|Changsha, China|2|1|0.5|0.5|0.5|1|Fine.  Day.  Unopposed.  G3M2 (Nell)(2) vs Changsha (1).  D10=6+1=7, -1 PP.",
  "20|120|1|SO|39|1||Asian|JPN|CHI|AC|STRAT|D,U|Changsha, China|1|1|0.4|0.4|-0.4|0|Day.  Unopposed.  Ki-30 (Ann) (1) -> Changsha 1 FAC.  D10=3+1=4, Missed.",
  "60||||||||Att MP|Def MP|AC|GSTK|S,U,O|Ground Strike|# att|# def|p0|Ex flips|# - Ex|# flips|S=surprise, U=unopposed, O=opposed.  Metrics:  (1) # attacking = number of assigned bombers & atry divs, (2) # targets=number of organized targets subject to the ground\nstrike AFTER fighter reaction (i.e., intercepts), (3) p0=probability of flipping a given target AFTER air-to-air and AA fire, (4) expected number of flips, (5) Actual # - Expected\n# of flips, (6) # of flips.|3",
  "40|1950|11|MJ|41|7||Asian|JPN|NAT|AC|GSTK|U,F,C|CHI 85,133|1|1|0.3|0.3|||Fine.  Mtn(Clear).  Unopposed.  D3A2(Val)(3) vs Chiang HQ-I.  Only 30%, but if flipped then both Chinese HQs (Chiang & Mao) are flipped (again) with only 1 being reorg\nassuming China doesn't wish to expend their 1 oil, which is a VERY good assumption.  GSTK RES D10=2 -> flipped!",
  "80|1770|10|MA|41|8||Asian|JPN|CCP|AC|GSTK|U,A,Sn|CHI 77,139|2|1|0.28||||Unopposed.  Air & Artillery.  Snow.  A6M2 Zero F/B(1/2=1) & 150 mm arty div(4/2=2) -> Mao HQ-I.  28% chance of flipping Mao, who's also stacked with flipped Garr army.\nFlip would be significant because both Chiang & Mao would be flipped and only 1 could be reorg unless the Chinese were willing to expend their only oil point (unlikely).\nChina hold's their breath.  GSTK RES:  (1) A6M2 Zero F/B (1/2=1) vs Mao HQ-I=6 -> no, (2) 150 mm arty div(4/2=2) vs Mao HQ-I=2 -> flipped!  Definitely a tactical error on the\nCCP's part by overlooking the IJA arty div and not moving Mao away.",
  "80|971|6|JA|40|7||Asian|JPN|CCP|AC|GSTK|U,F|CHI 74,140|2|1|0.44|0.44|||Fine.  Unopposed.  D3A2 Val(3), Ki-51 Sonia(2) vs CCP 8th Rte army (Mountains).  Yamamoto sees an opportunity if he can flip (44%) and then put out of supply to destroy it\nand trapping (i.e., surrounding) the adjacent CCP Cav corps & div.  Maybe it's just a sign of my poor play, but I'm constantly amazed how good a move looks from one side\n(e.g., CCP) and then when looking at it from the other side (e.g., Japan) one sees a vulnerability as now.  GSTK RES.  (1) D3A2 Val(3)=6 -> missed, (2) Ki-51 Sonia(2)=6 ->\nmissed.  Well, I think Mao just dodge a bullet.",
  "40|662|5|MJ|40|1||Asian|JPN|CCP|AC|GSTK|U|CHI 66,142|2|1|0.37|0.37|0.63|1|Fine.  Unopposed.  D3A2 Val(3), Ki-32 Mary(1) -> OOS CCP MIL Army.  RES.  Ki-32(1) vs OOS Sian MIL=4 (missed), D3A2(3) vs OOS MIL=3 (flipped), which reduces def CF 3 -> 1.",
  "40|616|4|MA|40|12||Asian|JPN|NAT|AC|GSTK|U,R|Kweilin, China|1|1|0.1|0.1|-0.1|0|Rain.  Unopposed.  Ki-27 Mary F/B(1/2=1) vs Nationalist 1st inf army.  It's a long shot (10%) but one without risk and could have significant consequences if it pays off.  RES.\n "
];

const tabs = [
  ["WA", 49], ["L", 31], ["LRG", 42], ["CP", 44], ["BOA", 52], ["HC", 44], ["GLS", 49], ["WAR", 57], ["ECON", 62],
  ["USA", 52], ["CW", 47], ["FRA", 50], ["USSR", 59], ["CHI", 48], ["GER", 51], ["ITA", 46], ["JPN", 50],
  ["VCH", 53], ["RAD", 53], ["JWP", 52], ["EPLT", 55], ["1939", 54], ["SUM", 55], ["opt", 47], ["obj", 45],
  ["bid", 46], ["SJPC", 55], ["NSP", 52], ["SJP", 45], ["CD", 45], ["NI", 40], ["MK", 46], ["LL", 39],
  ["PPU", 47], ["PvB", 53]
];

function add(parent, tag, cls, text) {
  const el = document.createElement(tag);
  if (cls) el.className = cls;
  if (text !== undefined) el.textContent = text;
  parent.appendChild(el);
  return el;
}

function cellClass(i) {
  if (i === 19) return "notes";
  if (i === 20) return "mark";
  if (i > 20) return "blank";
  return "";
}

const cols = document.getElementById("cols");
widths.forEach(w => add(cols, "col").style.width = w + "px");
add(cols, "col");

const head = document.getElementById("head");
const lettersRow = add(head, "tr", "letters");
add(lettersRow, "th", "corner", "");
letters.forEach(l => add(lettersRow, "th", "", l));

const namesRow = add(head, "tr", "names");
add(namesRow, "th", "rownum", "1");
names.forEach((name, i) => {
  if (i < 6) {
    add(add(namesRow, "td", "turned"), "span", "", name);
  } else {
    add(namesRow, "td", cellClass(i), name);
  }
});

const rows = document.getElementById("rows");
data.forEach((line, r) => {
  const [height, ...cells] = line.split("|");
  const tr = add(rows, "tr");
  tr.style.height = height + "px";
  add(tr, "th", "rownum", r + 2);
  for (let i = 0; i < letters.length; i++) {
    add(tr, "td", cellClass(i), cells[i] || "");
  }
});

const tabList = document.getElementById("tabs");
tabs.forEach(([name, width]) => {
  const tab = add(tabList, "button", name === "LRG" ? "tab active" : "tab", name);
  tab.style.width = width + "px";
});
```
